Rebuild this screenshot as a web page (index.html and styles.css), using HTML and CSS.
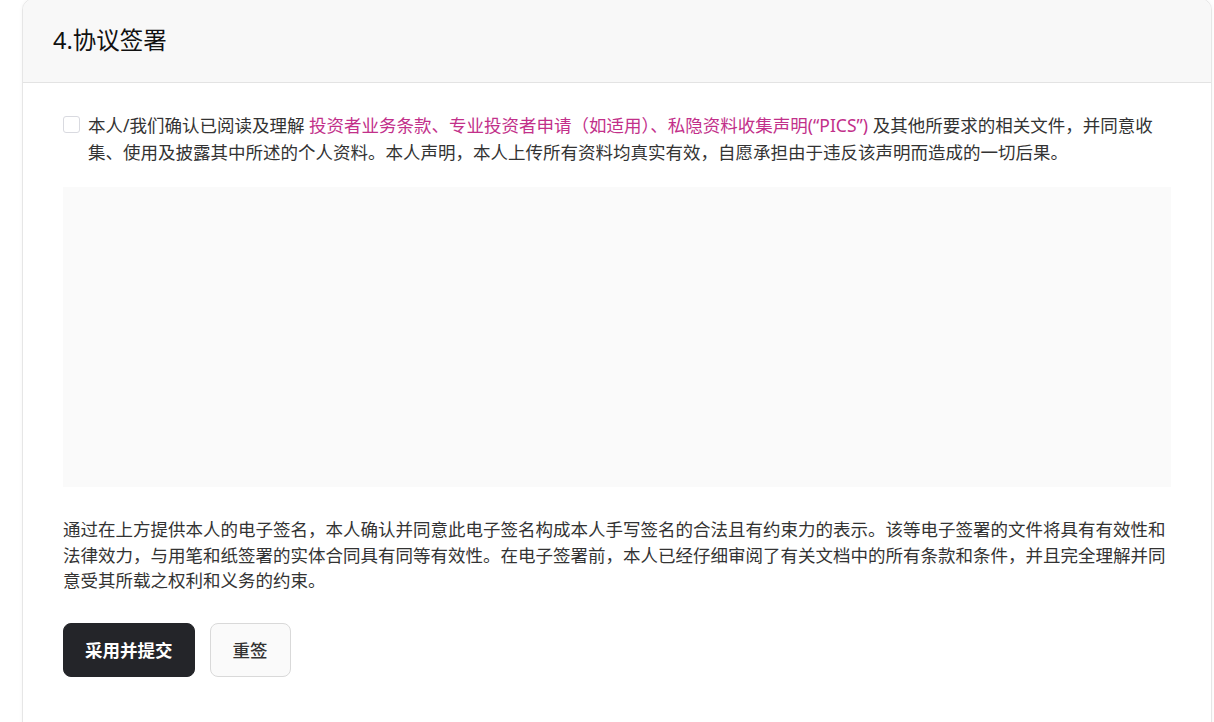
FILE: index.html
```html
<!DOCTYPE html>
<html lang="zh-CN">
<head>
<meta charset="utf-8">
<title>协议签署</title>
<link rel="stylesheet" href="styles.css">
</head>
<body>
<div class="page">
  <section class="card">
    <header class="card-header">
      <h2 class="card-title">4.协议签署</h2>
    </header>
    <div class="card-body">
      <div class="agree">
        <span class="checkbox"></span>
        <p class="agree-text">本人/我们确认已阅读及理解 <a class="link" href="#">投资者业务条款、专业投资者申请（如适用）、私隐资料收集声明(“PICS”)</a> 及其他所要求的相关文件，并同意收集、使用及披露其中所述的个人资料。本人声明，本人上传所有资料均真实有效，自愿承担由于违反该声明而造成的一切后果。</p>
      </div>
      <div class="sign-pad"></div>
      <p class="note">通过在上方提供本人的电子签名，本人确认并同意此电子签名构成本人手写签名的合法且有约束力的表示。该等电子签署的文件将具有有效性和法律效力，与用笔和纸签署的实体合同具有同等有效性。在电子签署前，本人已经仔细审阅了有关文档中的所有条款和条件，并且完全理解并同意受其所载之权利和义务的约束。</p>
      <div class="actions">
        <button class="btn btn-primary" type="button">采用并提交</button>
        <button class="btn btn-default" type="button">重签</button>
      </div>
    </div>
  </section>
</div>
</body>
</html>
```

FILE: styles.css
```css
* { box-sizing: border-box; }
html, body { margin: 0; padding: 0; background: #fff; }
body {
  font-family: "Noto Sans", "Noto Sans CJK SC", sans-serif;
  color: #333;
  overflow: hidden;
}
.page {
  padding: 0 2px 0 22px;
}
.card {
  margin-top: -2px;
  border: 1px solid #e6e6e6;
  border-radius: 12px;
  background: #fff;
  box-shadow: 0 0 4px rgba(0,0,0,0.04);
  overflow: hidden;
}
.card-header {
  background: #f8f8f8;
  border-bottom: 1px solid #e3e3e3;
  height: 84px;
  padding: 0 30px;
  display: flex;
  align-items: center;
}
.card-title {
  margin: 0;
  font-size: 23.5px;
  font-weight: 400;
  color: #111;
  line-height: 1;
}
.card-body {
  padding: 29px 40px 80px;
}
.agree {
  display: flex;
  align-items: flex-start;
  gap: 8px;
  font-size: 17.5px;
  line-height: 26.5px;
  color: #333;
}
.checkbox {
  flex: none;
  width: 17px;
  height: 17px;
  margin-top: 4px;
  border: 1px solid #d9dae0;
  border-radius: 3px;
  background: #fff;
}
.agree-text {
  flex: 1;
  margin: 0;
}
.link {
  color: #c2308a;
  text-decoration: none;
}
.sign-pad {
  margin-top: 22px;
  height: 300px;
  background: #fafafa;
}
.note {
  margin: 30px 0 0;
  font-size: 17.5px;
  line-height: 25.5px;
  color: #333;
}
.actions {
  display: flex;
  gap: 15px;
  margin-top: 29px;
}
.btn {
  height: 54px;
  padding: 0 21px;
  border-radius: 8px;
  font-family: "Noto Sans", "Noto Sans CJK SC", sans-serif;
  font-size: 17.5px;
  cursor: pointer;
}
.btn-primary {
  background: #242529;
  border: 1px solid #242529;
  color: #fff;
  font-weight: 700;
}
.btn-default {
  background: #fafafa;
  border: 1px solid #d9d9d9;
  color: #333;
  font-weight: 500;
  padding: 0 22px;
}
```
